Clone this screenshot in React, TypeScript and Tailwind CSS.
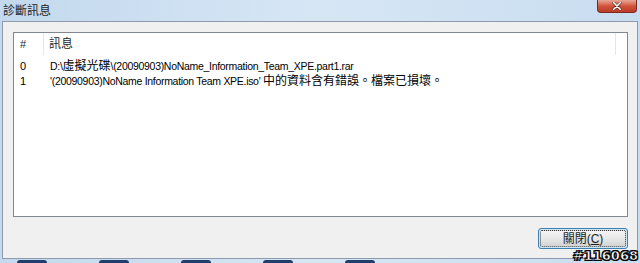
const ROWS = [
  { id: '0', text: 'D:\\虛擬光碟\\(20090903)NoName_Information_Team_XPE.part1.rar' },
  { id: '1', text: "'(20090903)NoName Information Team XPE.iso' 中的資料含有錯誤。檔案已損壞。" },
]

const FONT = "font-['Segoe_UI','Liberation_Sans','Noto_Sans_CJK_TC',sans-serif]"

// Latin runs are set narrower than CJK runs, like Segoe UI next to a CJK fallback
function Mixed({ text }: { text: string }) {
  const parts = text.split(/([\u3000-\u303f\u4e00-\u9fff]+)/).filter(Boolean)
  return (
    <>
      {parts.map((p, i) =>
        /[\u3000-\u303f\u4e00-\u9fff]/.test(p) ? (
          <span key={i} className="text-[12px]">{p}</span>
        ) : (
          <span key={i} className="text-[10.5px] tracking-[-0.3px]">{p}</span>
        )
      )}
    </>
  )
}

export default function App() {
  return (
    <div
      className={`relative w-[640px] h-[263px] flex flex-col overflow-hidden bg-gradient-to-r from-[#c4d9ee] via-[#d6e6f5] to-[#c9ddf0] text-[12px] text-black ${FONT}`}
    >
      {/* title bar */}
      <div className="h-[21px] flex items-start justify-between shrink-0">
        <div className="pl-[3px] pt-[3px] leading-[16px] text-[12px] text-[#1e1e1e]">診斷訊息</div>
        <div className="mr-[3px] w-[40px] h-[13px] rounded-b-[4px] border border-t-0 border-[#7a2a20] bg-gradient-to-b from-[#e8a696] via-[#d2533c] to-[#bb3b26] flex items-center justify-center">
          <svg width="10" height="8" viewBox="0 0 10 8">
            <path d="M1.5 0.5 L8.5 7.5 M8.5 0.5 L1.5 7.5" stroke="#4a1a12" strokeWidth="2.6" strokeLinecap="round" />
            <path d="M1.5 0.5 L8.5 7.5 M8.5 0.5 L1.5 7.5" stroke="#ffffff" strokeWidth="1.6" strokeLinecap="round" />
          </svg>
        </div>
      </div>

      {/* client frame */}
      <div className="mx-[2px] h-[238px] shrink-0 border border-[#8c9aac] bg-[#f0f0f0] flex flex-col pt-[10px] pl-[10px] pr-[9px] pb-[9px]">
        <div className="h-[185px] border border-[#828790] bg-white flex flex-col">
          <div className="h-[22px] flex items-stretch text-[#1e1e1e]">
            <div className="w-[30px] pl-[6px] flex items-center border-r border-[#e5e5e5] text-[11px]">#</div>
            <div className="w-[572px] pl-[5px] flex items-center border-r border-[#e5e5e5]">訊息</div>
            <div className="flex-1" />
          </div>
          <div className="pt-[4px] flex flex-col">
            {ROWS.map(row => (
              <div key={row.id} className="h-[15px] flex items-center leading-[15px]">
                <div className="w-[30px] pl-[6px] text-[11px]">{row.id}</div>
                <div className="pl-[6px] whitespace-nowrap">
                  <Mixed text={row.text} />
                </div>
              </div>
            ))}
          </div>
        </div>

        <div className="flex justify-end mt-[11px]">
          <button className="w-[90px] h-[21px] rounded-[3px] border border-[#3c7fb1] p-[1px] bg-[#cde6f7]">
            <div className="h-full rounded-[2px] border border-dotted border-[#333] bg-gradient-to-b from-[#f4f4f4] via-[#e8e8e8] to-[#d4d4d4] flex items-center justify-center text-[12px] leading-none text-[#1e1e1e]">
              關閉(<u>C</u>)
            </div>
          </button>
        </div>
      </div>

      {/* taskbar glimpse */}
      <div className="flex-1 flex items-end gap-[52px] pl-[17px]">
        <div className="w-[30px] h-[3px] rounded-t bg-[#1f3e6b]" />
        <div className="w-[30px] h-[3px] rounded-t bg-[#1f3e6b]" />
        <div className="w-[30px] h-[3px] rounded-t bg-[#1f3e6b]" />
        <div className="w-[30px] h-[3px] rounded-t bg-[#1f3e6b]" />
        <div className="w-[30px] h-[3px] rounded-t bg-[#1f3e6b]" />
      </div>

      {/* watermark */}
      <div className="absolute right-[2px] bottom-[1px] text-[13px] font-bold leading-none text-white font-['DejaVu_Sans',sans-serif] [-webkit-text-stroke:0.6px_#000] [text-shadow:1px_1px_0_#000,-1px_-1px_0_#000,1px_-1px_0_#000,-1px_1px_0_#000]">
        #116068
      </div>
    </div>
  )
}
